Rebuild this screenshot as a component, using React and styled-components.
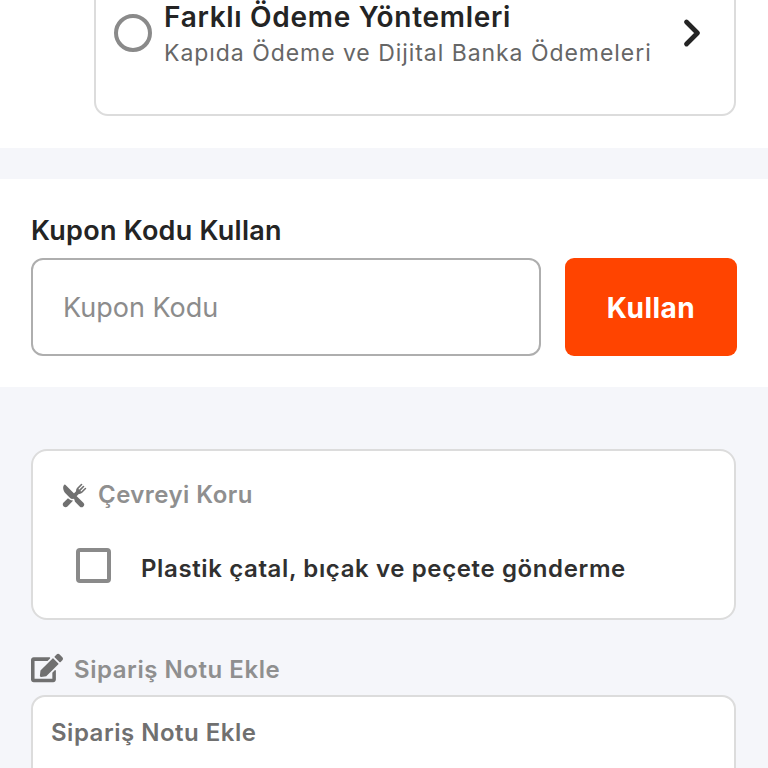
import React from "react";
import styled, { createGlobalStyle } from "styled-components";
import { FaEdit } from "react-icons/fa";
import { IoRestaurant } from "react-icons/io5";
import { LuChevronRight } from "react-icons/lu";

const Global = createGlobalStyle`
  html, body { margin: 0; padding: 0; background: #f5f6fa; }
  body { font-family: Inter, "Liberation Sans", sans-serif; overflow: hidden; height: 768px; }
  * { box-sizing: border-box; }
`;
const Page = styled.div`
  width: 768px; height: 768px; overflow: hidden; background: #f5f6fa;
`;
const PaymentSection = styled.section`
  background: #fff; height: 148px; padding: 0 32px 0 94px; overflow: hidden;
`;
const PaymentCard = styled.div`
  height: 136px; margin-top: -20px; width: 642px; border: 2px solid #dcdcdc; border-radius: 14px;
  padding: 18px 20px 0 18px; display: flex; align-items: flex-start; background: #fff;
`;
const Radio = styled.span`
  width: 38px; height: 38px; border: 4px solid #8a8a8a; border-radius: 50%; flex: none; margin-top: 14px;
`;
const PaymentText = styled.div`
  margin-left: 12px; flex: 1; min-width: 0; display: flex; flex-direction: column;
`;
const PaymentTitle = styled.div`
  font-size: 28px; line-height: 34px; font-weight: 600; color: #242424; letter-spacing: 0.7px; white-space: nowrap;
`;
const PaymentSub = styled.div`
  font-size: 23px; line-height: 28px; margin-top: 5px; color: #666; letter-spacing: 0.95px; white-space: nowrap;
`;
const Chevron = styled(LuChevronRight)`
  width: 44px; height: 44px; color: #242424; stroke-width: 2.6; flex: none; margin-top: 11px;
`;
const CouponSection = styled.section`
  margin-top: 31px; background: #fff; height: 208px; padding: 35px 31px 0;
`;
const CouponTitle = styled.div`
  font-size: 27px; line-height: 34px; font-weight: 600; color: #242424; letter-spacing: 0.25px; white-space: nowrap;
`;
const CouponRow = styled.div`
  display: flex; gap: 24px; margin-top: 10px;
`;
const CouponInput = styled.div`
  width: 510px; height: 98px; border: 2px solid #aeaeae; border-radius: 12px; padding: 1px 0 0 30px;
  display: flex; align-items: center; font-size: 27px; color: #8c8c8c;
`;
const CouponButton = styled.button`
  width: 172px; height: 98px; border: 0; border-radius: 9px; background: #ff4400; color: #fff; padding: 1px 0 0;
  font: 700 28px Inter, "Liberation Sans", sans-serif; letter-spacing: 0.5px;
`;
const Lower = styled.section`
  padding: 62px 31px 0;
`;
const EnvCard = styled.div`
  height: 171px; width: 705px; background: #fff; border: 2px solid #dcdcdc; border-radius: 16px; padding: 28px 29px 0;
`;
const EnvHeader = styled.div`
  display: flex; align-items: center; gap: 11px; font-size: 24px; line-height: 32px; font-weight: 600; color: #8f8f8f; letter-spacing: 0.45px;
  svg { width: 25px; height: 25px; color: #707070; flex: none; }
`;
const CheckRow = styled.div`
  display: flex; align-items: center; margin: 37px 0 0 14px;
`;
const CheckBox = styled.span`
  width: 35px; height: 35px; border: 4px solid #8a8a8a; border-radius: 4px; flex: none;
`;
const CheckLabel = styled.span`
  margin: 5px 0 0 30px; font-size: 24px; font-weight: 600; color: #303030; letter-spacing: 0.62px; white-space: nowrap;
`;
const NoteHeader = styled.div`
  display: flex; align-items: center; gap: 11px; margin-top: 31px; height: 36px;
  font-size: 24px; font-weight: 600; color: #8f8f8f; letter-spacing: 0.55px;
  svg { width: 32px; height: 32px; color: #707070; flex: none; margin-top: -3px; }
`;
const NoteBox = styled.div`
  width: 705px; height: 120px; margin-top: 8px; background: #fff; border: 2px solid #dcdcdc; border-radius: 14px;
  padding: 20px 18px 0; font-size: 24px; line-height: 32px; font-weight: 600; color: #707070; letter-spacing: 0.5px;
`;

export default function App() {
  return (
    <Page>
      <Global />
      <PaymentSection>
        <PaymentCard>
          <Radio />
          <PaymentText>
            <PaymentTitle>Farklı Ödeme Yöntemleri</PaymentTitle>
            <PaymentSub>Kapıda Ödeme ve Dijital Banka Ödemeleri</PaymentSub>
          </PaymentText>
          <Chevron />
        </PaymentCard>
      </PaymentSection>
      <CouponSection>
        <CouponTitle>Kupon Kodu Kullan</CouponTitle>
        <CouponRow>
          <CouponInput>Kupon Kodu</CouponInput>
          <CouponButton>Kullan</CouponButton>
        </CouponRow>
      </CouponSection>
      <Lower>
        <EnvCard>
          <EnvHeader><IoRestaurant />Çevreyi Koru</EnvHeader>
          <CheckRow>
            <CheckBox />
            <CheckLabel>Plastik çatal, bıçak ve peçete gönderme</CheckLabel>
          </CheckRow>
        </EnvCard>
        <NoteHeader><FaEdit />Sipariş Notu Ekle</NoteHeader>
        <NoteBox>Sipariş Notu Ekle</NoteBox>
      </Lower>
    </Page>
  );
}
